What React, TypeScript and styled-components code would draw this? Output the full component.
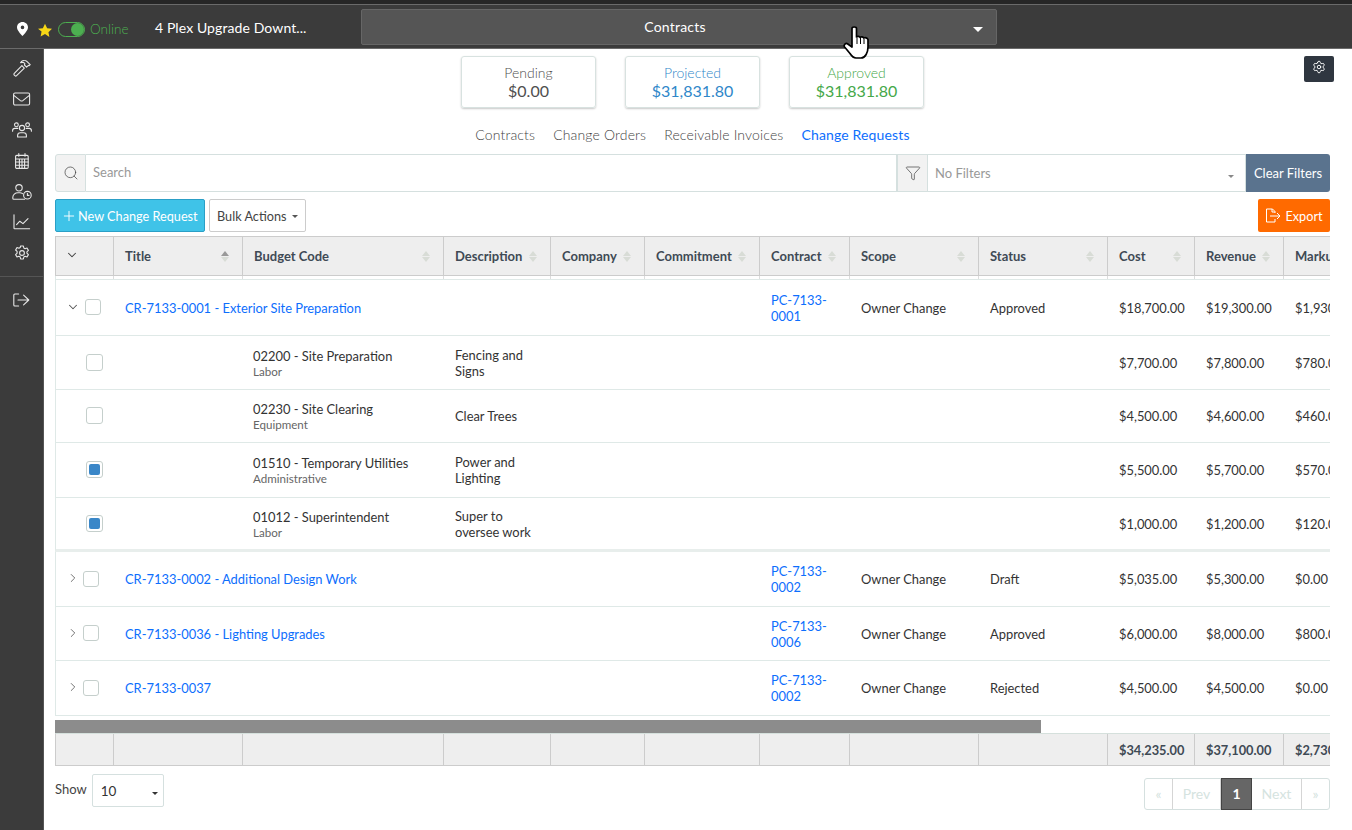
import React from "react";
import styled, { createGlobalStyle } from "styled-components";
import { Settings, Search as SearchIcon, Filter, ChevronDown, ChevronRight, Plus } from "lucide-react";

const Global = createGlobalStyle`
  html, body { margin: 0; padding: 0; background: #fff; }
  body { font-family: Lato, "Liberation Sans", sans-serif; font-size: 14px; color: #333; overflow: hidden; }
  * { box-sizing: border-box; }
`;

const Page = styled.div`width: 1352px; height: 830px; display: flex; flex-direction: column; position: relative; overflow: hidden;`;
const TopStrip = styled.div`height: 4px; background: #262626; flex: none;`;
const TopBar = styled.header`
  height: 45px; flex: none; background: #3b3b3b; border-top: 1px solid #6a6a6a; border-bottom: 1px solid #6b6b6b;
  display: flex; align-items: flex-start; color: #fff; position: relative;
`;
const PinWrap = styled.span`margin: 17px 0 0 17px; display: flex;`;
const StarWrap = styled.span`margin: 18px 0 0 9px; display: flex;`;
const Toggle = styled.span`
  width: 27px; height: 15px; margin: 17px 0 0 5px; border: 1px solid #4caf50; border-radius: 8px; position: relative; display: block; flex: none;
  &::after { content: ""; position: absolute; right: 0; top: 0; width: 13px; height: 13px; border-radius: 50%; background: #4caf50; }
`;
const OnlineLabel = styled.span`color: #4caf50; font-size: 13.6px; line-height: 17px; margin: 16px 0 0 5px; font-weight: 300; width: 38px; white-space: nowrap;`;
const ProjectName = styled.span`font-size: 14px; line-height: 17px; margin: 14px 0 0 27px; width: 206px; white-space: nowrap; letter-spacing: .1px;`;
const ModuleSelect = styled.div`
  width: 636px; height: 36px; margin-top: 4px; background: #555; border: 1px solid #666; border-radius: 2px; display: flex; align-items: center; justify-content: center;
  font-size: 14px; letter-spacing: .2px; position: relative; padding: 0 8px 2px 0;
  &::after { content: ""; position: absolute; right: 13px; top: 17px; border: 5px solid transparent; border-top-color: #fff; border-bottom: 0; }
`;
const Shell = styled.div`flex: 1; display: flex; min-height: 0;`;
const Sidebar = styled.nav`width: 44px; flex: none; background: #3b3b3b; border-right: 1px solid #555; display: flex; flex-direction: column; align-items: center; color: #e8e8e8; padding-top: 3.5px;`;
const SideItem = styled.span`height: 30.9px; flex: none; display: flex; align-items: center; justify-content: center; width: 100%;`;
const SideDivider = styled.div`width: 100%; height: 1px; background: #555; margin: 7px 0 7.5px;`;
const Main = styled.main`flex: 1; min-width: 0; padding: 7px 22px 0 11px; position: relative;`;
const GearButton = styled.div`position: absolute; right: 18px; top: 7px; width: 30px; height: 26px; background: #2f3640; border-radius: 2px; display: flex; align-items: center; justify-content: center; color: #fff; padding-bottom: 4px;`;
const Summary = styled.div`display: flex; justify-content: center; gap: 29px; height: 52px;`;
const Card = styled.div<{ $color: string }>`
  width: 135px; height: 52px; border: 1px solid #d8e2e0; border-radius: 3px; box-shadow: 0 1px 2px rgba(0,0,0,.22); text-align: center; color: ${(p) => p.$color};
  padding-top: 7px;
`;
const CardLabel = styled.div`font-size: 14px; line-height: 17px; font-weight: 300;`;
const CardValue = styled.div`font-size: 16px; line-height: 19px;`;
const Tabs = styled.div`display: flex; justify-content: center; gap: 18px; margin-top: 17px; height: 19px; font-size: 14px; line-height: 19px; letter-spacing: .15px;`;
const Tab = styled.span<{ $active?: boolean }>`color: ${(p) => (p.$active ? "#0d6efd" : "#444")}; font-weight: ${(p) => (p.$active ? 400 : 300)};`;
const SearchBar = styled.div`margin-top: 10px; height: 38px; display: flex;`;
const IconAddon = styled.div`width: 31px; flex: none; background: #f2f2f2; border: 1px solid #d5e0df; display: flex; align-items: center; justify-content: center; color: #444;`;
const SearchAddon = styled(IconAddon)`border-radius: 3px 0 0 3px;`;
const SearchInput = styled.div`flex: none; width: 811px; border: 1px solid #d5e0df; border-left: 0; color: #999; font-size: 13px; display: flex; align-items: center; padding-left: 7px; padding-bottom: 2px;`;
const FilterInput = styled.div`flex: 1; border: 1px solid #d5e0df; border-left: 0; color: #999; font-size: 13px; display: flex; align-items: center; padding-left: 7px; position: relative;
  &::after { content: ""; position: absolute; right: 11px; top: 20px; border: 3px solid transparent; border-top-color: #888; border-bottom: 0; }
`;
const ClearButton = styled.div`width: 84px; flex: none; background: #5a738e; color: #fff; font-size: 13px; border-radius: 0 3px 3px 0; display: flex; align-items: center; justify-content: center; font-weight: 400;`;
const Actions = styled.div`display: flex; margin-top: 7px; height: 33px; gap: 4px;`;
const BaseButton = styled.div`height: 33px; border-radius: 2px; display: flex; align-items: center; font-size: 12.7px; font-weight: 400;`;
const NewButton = styled(BaseButton)`width: 150px; background: #3fc3e8; border: 1px solid #2a9fc6; color: #fff; padding-left: 5px; gap: 1px;`;
const BulkButton = styled(BaseButton)`width: 97px; border: 1px solid #ccc; color: #444; padding-left: 7px; gap: 6px;
  &::after { content: ""; border: 3px solid transparent; border-top-color: #555; border-bottom: 0; margin-top: 1px; }
`;
const ExportButton = styled(BaseButton)`width: 72px; margin-left: auto; background: #ff6a00; color: #fff; justify-content: center; gap: 4px;`;
const TableClip = styled.div`margin-top: 4px; width: 1275px; overflow: hidden; position: relative;`;
const GRID = "58px 129px 201px 107px 94px 115px 90px 129px 129px 87px 89px 100px";
const HeadRow = styled.div`display: grid; grid-template-columns: ${GRID}; width: 1329px; height: 40px; background: #eee; border-top: 1px solid #ccc; border-bottom: 1px solid #ccc; border-left: 1px solid #ccc;`;
const HeadCell = styled.div`border-right: 1px solid #ccc; padding: 0 11px; display: flex; align-items: center; justify-content: space-between; font-weight: 700; font-size: 13px; color: #3f4a55; white-space: nowrap; overflow: hidden;`;
const ExpanderHead = styled(HeadCell)`padding: 0 0 3px 9px; color: #444;`;
const Sort = styled.span<{ $up?: boolean }>`
  display: flex; flex-direction: column; gap: 1px; flex: none; margin-right: 2px;
  &::before { content: ""; border: 4px solid transparent; border-top: 0; border-bottom: 5px solid ${(p) => (p.$up ? "#999" : "#d8dcd6")}; }
  &::after { content: ""; border: 4px solid transparent; border-bottom: 0; border-top: 5px solid #d8dcd6; }
`;
const Gap = styled.div`height: 4px; width: 1329px; display: grid; grid-template-columns: ${GRID}; border-bottom: 1px solid #dfe9e7; border-left: 1px solid #dfe9e7;`;
const Tick = styled.div`border-right: 1px solid #ddd;`;
const Row = styled.div<{ $h: number; $thick?: boolean }>`
  display: grid; grid-template-columns: ${GRID}; width: 1329px; height: ${(p) => p.$h}px; border-left: 1px solid #dfe9e7;
  border-bottom: ${(p) => (p.$thick ? "3px solid #e8eeec" : "1px solid #dfe9e7")}; align-items: center; font-size: 12.9px; color: #333;
`;
const Cell = styled.div`padding: 0 11px; line-height: 16px; white-space: nowrap;`;
const CodeCell = styled(Cell)`padding-left: 10px; margin-top: 2px;`;
const SelectCell = styled.div<{ $pad: number }>`display: flex; align-items: center; padding-left: ${(p) => p.$pad}px; color: #444;`;
const Check = styled.span<{ $on?: boolean; $ml?: number; $size: number }>`
  width: ${(p) => p.$size}px; height: ${(p) => p.$size}px; border: 1px solid #c5cfcc; border-radius: 3px; background: #fff; display: block; margin-left: ${(p) => p.$ml ?? 0}px; padding: 2px; margin-top: -1px;
  &::after { content: ""; display: ${(p) => (p.$on ? "block" : "none")}; width: 100%; height: 100%; border-radius: 2px; background: #3a87c8; }
`;
const Caret = styled.span`width: 14px; display: flex; justify-content: center; margin-top: -2px; color: #555;`;
const TitleCell = styled(Cell)`padding: 0;`;
const TitleLink = styled.a`color: #0d6efd; white-space: nowrap; padding-left: 11px; display: block;`;
const LinkCell = styled(Cell)`color: #0d6efd;`;
const Sub = styled.div`font-size: 11.6px; color: #666; line-height: 16px;`;
const Scrollbar = styled.div`height: 13px; margin-top: 4px; width: 986px; background: #8c8c8c; flex: none; border-bottom: 1px solid #8c8c8c;`;
const FootRow = styled.div`display: grid; grid-template-columns: ${GRID}; width: 1329px; height: 33px; background: #eee; border-top: 1px solid #d5e0dc; border-bottom: 1px solid #ccc; border-left: 1px solid #ccc;`;
const FootCell = styled.div`border-right: 1px solid #ccc; padding: 0 11px; display: flex; align-items: center; font-weight: 700; font-size: 12.8px; color: #3f4a55; white-space: nowrap;`;
const Footer = styled.div`display: flex; align-items: flex-start; margin-top: 8px;`;
const ShowLabel = styled.span`font-size: 13px; margin-top: 7px; color: #444;`;
const PageSize = styled.div`width: 72px; height: 33px; border: 1px solid #d5e0df; border-radius: 2px; margin-left: 5px; display: flex; align-items: center; padding-left: 8px; position: relative; font-size: 13.5px;
  &::after { content: ""; position: absolute; right: 5px; top: 17px; border: 3px solid transparent; border-top-color: #333; border-bottom: 0; }
`;
const Pager = styled.div`margin: 4px 0 0 auto; display: flex; height: 32px; border: 1px solid #d5e0df; border-radius: 3px; font-size: 14px; color: #d5e3e0;`;
const PageBtn = styled.span<{ $w: number; $on?: boolean }>`
  width: ${(p) => p.$w}px; display: flex; align-items: center; justify-content: center; border-right: 1px solid #d5d5d5; padding-bottom: 2px;
  &:last-child { border-right: 0; }
  ${(p) => p.$on && "background: #666; color: #fff; border: 1px solid #444; margin: -1px 0; font-weight: 700;"}
`;
const Cursor = styled.svg`position: absolute; left: 843px; top: 26px; pointer-events: none;`;

const IconSvg = ({ children, w = 18, h = 18 }: { children: React.ReactNode; w?: number; h?: number }) => (
  <svg width={w} height={h} viewBox={`0 0 ${w} ${h}`} fill="none" stroke="currentColor" strokeWidth="1.1" strokeLinejoin="round" strokeLinecap="round">{children}</svg>
);
const HammerIcon = () => (
  <IconSvg><path d="M1.3 14.4l7.6-7.7 2.4 2.4-7.7 7.6c-.5.5-1.2.5-1.7 0l-.6-.6c-.5-.5-.5-1.2 0-1.7z" /><path d="M7.6 3.6C9 1.6 11.6.8 13.6 2.2l3.6 3.4-1 1-.8-.2-1.8 1.8-2.2-2.2.5-1.4-1.6-1.3z" /></IconSvg>
);
const MailIcon = () => (
  <IconSvg h={14}><rect x=".6" y="1" width="16" height="12" rx="1.4" /><path d="M.8 3.4l6.6 5.2c.8.6 1.6.6 2.4 0l6.6-5.2" /></IconSvg>
);
const TeamIcon = () => (
  <IconSvg w={20} h={16}><circle cx="10" cy="6" r="2.6" /><path d="M5.6 15v-1.4c0-1.7 1.4-2.8 2.8-2.8h3.2c1.4 0 2.8 1.1 2.8 2.8V15z" /><circle cx="4.4" cy="2.8" r="1.9" /><path d="M.6 9.2v-.5c0-1.3 1-2.3 2.2-2.3h3" /><circle cx="15.6" cy="2.8" r="1.9" /><path d="M19.4 9.2v-.5c0-1.3-1-2.3-2.2-2.3h-3" /></IconSvg>
);
const CalendarIcon = () => (
  <IconSvg w={14} h={16}><rect x=".6" y="2.4" width="12.6" height="13" rx="1.2" /><path d="M.6 6h12.6M.6 9h12.6M.6 12.2h12.6M4.4 6v9.4M7 6v9.4M9.6 6v9.4M3.8.6v2.6M10 .6v2.6" /></IconSvg>
);
const UserClockIcon = () => (
  <IconSvg w={20} h={16}><circle cx="7" cy="3.8" r="3.2" /><path d="M10.6 9.6c-.8-.5-1.8-.8-2.8-.8H6c-3 0-5.2 2-5.2 4.6v.8c0 .6.4 1 1 1h10.8" /><circle cx="15.4" cy="11.2" r="3.8" /><path d="M15.4 9.2v2.2h1.6" /></IconSvg>
);
const ChartIcon = () => (
  <IconSvg h={16}><path d="M1 .8v13.4c0 .4.2.6.6.6h15" /><path d="M3.6 10.6l3.2-3.4 3.2 2.4 5-5" /></IconSvg>
);
const GearIcon = () => (
  <IconSvg w={16} h={16}><circle cx="8" cy="8" r="2.4" /><path d="M6.6 1h2.8l.4 2 1.3.7 1.9-.7 1.4 2.4-1.5 1.4v1.4l1.5 1.4-1.4 2.4-1.9-.7-1.3.7-.4 2H6.6l-.4-2-1.3-.7-1.9.7-1.4-2.4 1.5-1.4V6.4L1.6 5l1.4-2.4 1.9.7 1.3-.7z" /></IconSvg>
);
const SignOutIcon = () => (
  <IconSvg w={17} h={14}><path d="M5.6 1H1.8C1.2 1 .8 1.4.8 2v10c0 .6.4 1 1 1h3.8" /><path d="M5 7h10.6M10.6 2.2L15.8 7l-5.2 4.8" /></IconSvg>
);
const ExportIcon = () => (
  <svg width="16" height="15" viewBox="0 0 16 15" fill="none" stroke="currentColor" strokeWidth="1">
    <path d="M10 5V3.5L7.5 1H1.5v13H10v-3" /><path d="M7 1v3h3" /><path d="M5 8h10M12 5l3 3-3 3" />
  </svg>
);

type Money = [string, string, string];
const GroupRow = ({ open, title, contract, status, money, h }: { open?: boolean; title: string; contract: string; status: string; money: Money; h: number }) => (
  <Row $h={h}>
    <SelectCell $pad={10}>
      <Caret>{open ? <ChevronDown size={14} strokeWidth={1.8} /> : <ChevronRight size={14} strokeWidth={1.4} />}</Caret>
      <Check $size={16} $ml={open ? 5 : 3} />
    </SelectCell>
    <TitleCell><TitleLink>{title}</TitleLink></TitleCell>
    <Cell /><Cell /><Cell /><Cell />
    <LinkCell>PC-7133-<br />{contract}</LinkCell>
    <Cell>Owner Change</Cell>
    <Cell>{status}</Cell>
    {money.map((m) => <Cell key={m}>{m}</Cell>)}
  </Row>
);
const LineRow = ({ code, kind, desc, money, on, h, thick }: { code: string; kind: string; desc: React.ReactNode; money: Money; on?: boolean; h: number; thick?: boolean }) => (
  <Row $h={h} $thick={thick}>
    <SelectCell $pad={30}><Check $size={17} $on={on} /></SelectCell>
    <Cell />
    <CodeCell>{code}<Sub>{kind}</Sub></CodeCell>
    <Cell>{desc}</Cell>
    <Cell /><Cell /><Cell /><Cell /><Cell />
    {money.map((m) => <Cell key={m}>{m}</Cell>)}
  </Row>
);

const heads: [string, boolean][] = [["Title", true], ["Budget Code", false], ["Description", false], ["Company", false], ["Commitment", false], ["Contract", false], ["Scope", false], ["Status", false], ["Cost", false], ["Revenue", false]];

export default function App() {
  return (
    <Page>
      <Global />
      <TopStrip />
      <TopBar>
        <PinWrap>
          <svg width="11" height="14" viewBox="0 0 11 14"><path fill="#fff" fillRule="evenodd" d="M5.5 0C2.4 0 0 2.4 0 5.3 0 8.4 3.6 12 5.5 14 7.4 12 11 8.4 11 5.3 11 2.4 8.6 0 5.5 0zm0 3.6a1.8 1.8 0 1 1 0 3.6 1.8 1.8 0 0 1 0-3.6z" /></svg>
        </PinWrap>
        <StarWrap>
          <svg width="16" height="15" viewBox="0 0 24 24"><path fill="#f7d716" d="M12 1l3.4 7.2 7.8 1-5.7 5.4 1.5 7.8L12 17.6l-7 3.8 1.5-7.8L.8 9.2l7.8-1z" /></svg>
        </StarWrap>
        <Toggle />
        <OnlineLabel>Online</OnlineLabel>
        <ProjectName>4 Plex Upgrade Downt...</ProjectName>
        <ModuleSelect>Contracts</ModuleSelect>
      </TopBar>
      <Shell>
        <Sidebar>
          <SideItem><HammerIcon /></SideItem>
          <SideItem><MailIcon /></SideItem>
          <SideItem><TeamIcon /></SideItem>
          <SideItem><CalendarIcon /></SideItem>
          <SideItem><UserClockIcon /></SideItem>
          <SideItem><ChartIcon /></SideItem>
          <SideItem><GearIcon /></SideItem>
          <SideDivider />
          <SideItem><SignOutIcon /></SideItem>
        </Sidebar>
        <Main>
          <GearButton><Settings size={14} strokeWidth={1.6} /></GearButton>
          <Summary>
            <Card $color="#4f4f4f"><CardLabel>Pending</CardLabel><CardValue>$0.00</CardValue></Card>
            <Card $color="#2f87c9"><CardLabel>Projected</CardLabel><CardValue>$31,831.80</CardValue></Card>
            <Card $color="#45a849"><CardLabel>Approved</CardLabel><CardValue>$31,831.80</CardValue></Card>
          </Summary>
          <Tabs>
            <Tab>Contracts</Tab><Tab>Change Orders</Tab><Tab>Receivable Invoices</Tab><Tab $active>Change Requests</Tab>
          </Tabs>
          <SearchBar>
            <SearchAddon><SearchIcon size={16} strokeWidth={1.1} /></SearchAddon>
            <SearchInput>Search</SearchInput>
            <IconAddon><Filter size={16} strokeWidth={1.1} /></IconAddon>
            <FilterInput>No Filters</FilterInput>
            <ClearButton>Clear Filters</ClearButton>
          </SearchBar>
          <Actions>
            <NewButton><Plus size={16} strokeWidth={1.4} />New Change Request</NewButton>
            <BulkButton>Bulk Actions</BulkButton>
            <ExportButton><ExportIcon />Export</ExportButton>
          </Actions>
          <TableClip>
            <HeadRow>
              <ExpanderHead><ChevronDown size={14} strokeWidth={1.8} /></ExpanderHead>
              {heads.map(([h, up]) => <HeadCell key={h}>{h}<Sort $up={up} /></HeadCell>)}
              <HeadCell>Markup</HeadCell>
            </HeadRow>
            <Gap>{Array.from({ length: 12 }, (_, i) => <Tick key={i} />)}</Gap>
            <GroupRow open h={56} title="CR-7133-0001 - Exterior Site Preparation" contract="0001" status="Approved" money={["$18,700.00", "$19,300.00", "$1,930.00"]} />
            <LineRow h={54} code="02200 - Site Preparation" kind="Labor" desc={<>Fencing and<br />Signs</>} money={["$7,700.00", "$7,800.00", "$780.00"]} />
            <LineRow h={53} code="02230 - Site Clearing" kind="Equipment" desc="Clear Trees" money={["$4,500.00", "$4,600.00", "$460.00"]} />
            <LineRow h={55} on code="01510 - Temporary Utilities" kind="Administrative" desc={<>Power and<br />Lighting</>} money={["$5,500.00", "$5,700.00", "$570.00"]} />
            <LineRow h={54} on thick code="01012 - Superintendent" kind="Labor" desc={<>Super to<br />oversee work</>} money={["$1,000.00", "$1,200.00", "$120.00"]} />
            <GroupRow h={55} title="CR-7133-0002 - Additional Design Work" contract="0002" status="Draft" money={["$5,035.00", "$5,300.00", "$0.00"]} />
            <GroupRow h={54} title="CR-7133-0036 - Lighting Upgrades" contract="0006" status="Approved" money={["$6,000.00", "$8,000.00", "$800.00"]} />
            <GroupRow h={55} title="CR-7133-0037" contract="0002" status="Rejected" money={["$4,500.00", "$4,500.00", "$0.00"]} />
            <Scrollbar />
            <FootRow>
              {Array.from({ length: 9 }, (_, i) => <FootCell key={i} />)}
              <FootCell>$34,235.00</FootCell><FootCell>$37,100.00</FootCell><FootCell>$2,730.00</FootCell>
            </FootRow>
          </TableClip>
          <Footer>
            <ShowLabel>Show</ShowLabel>
            <PageSize>10</PageSize>
            <Pager>
              <PageBtn $w={28}>«</PageBtn><PageBtn $w={48}>Prev</PageBtn><PageBtn $w={31} $on>1</PageBtn><PageBtn $w={50}>Next</PageBtn><PageBtn $w={27}>»</PageBtn>
            </Pager>
          </Footer>
        </Main>
      </Shell>
      <Cursor width="27" height="34" viewBox="0 0 27 34">
        <path fill="#fff" stroke="#000" strokeWidth="1.7" strokeLinejoin="round" d="M9 2.5c0-2 4.5-2 4.5 0V11c1-.9 3-.9 3.6.4 1-.8 3-.7 3.6.6 1.2-.7 4-.3 4.3 1.6v7.4c0 5.4-2.6 11-7 11h-5c-3 0-4.4-2-6-4.5L1.6 21c-1.4-2.4 1.3-4.4 3.2-3L9 21z" />
        <path stroke="#000" strokeWidth="1" d="M14 12v6M17.5 12v6M21 13v5" />
      </Cursor>
    </Page>
  );
}
